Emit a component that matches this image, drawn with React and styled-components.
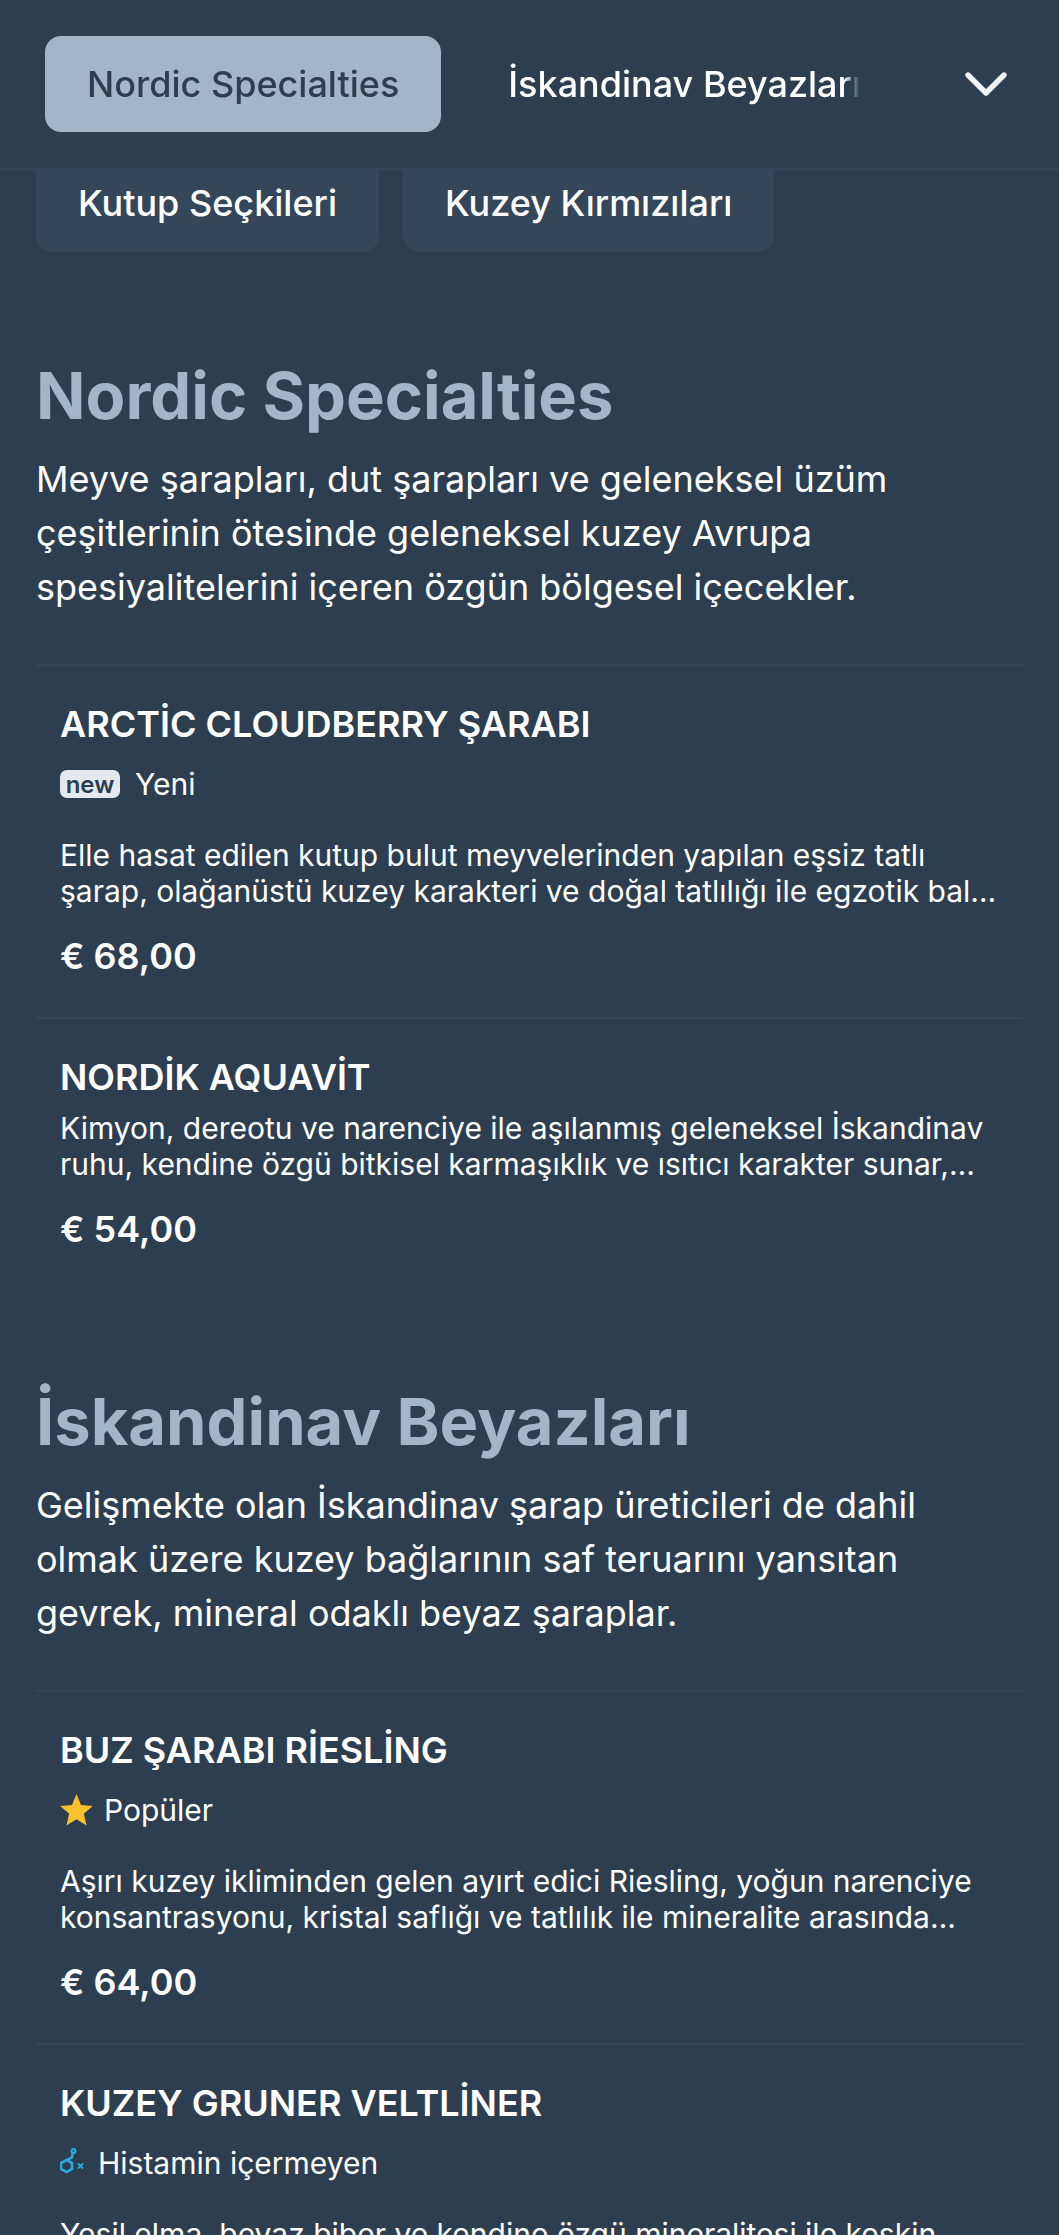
import React from 'react';
import styled, { createGlobalStyle } from 'styled-components';
import { ChevronDown } from 'lucide-react';

const GlobalStyle = createGlobalStyle`
  html, body {
    margin: 0;
    padding: 0;
    background: #2c3e50;
  }
  #root {
    height: 2235px;
    overflow: hidden;
  }
`;

const Page = styled.div`
  font-family: Inter, "Noto Sans", sans-serif;
  color: #fff;
  background: #2c3e50;
`;

const Header = styled.header`
  display: flex;
  align-items: center;
  height: 170px;
  padding: 0 37px 0 45px;
  box-sizing: border-box;
  border-bottom: 2px solid #34465a;
`;

const TabStrip = styled.div`
  display: flex;
  gap: 25px;
  width: 815px;
  overflow: hidden;
  mask-image: linear-gradient(to right, #000 98%, transparent);
`;

const Tab = styled.div`
  flex: none;
  display: flex;
  align-items: center;
  height: 96px;
  padding: 0 42px;
  border-radius: 16px;
  font-size: 36px;
  font-weight: 500;
  white-space: nowrap;
  color: ${(p) => (p.$active ? '#2c3e50' : '#fff')};
  background: ${(p) => (p.$active ? '#a3b5ca' : 'transparent')};
`;

const Toggle = styled.div`
  margin-left: auto;
  display: flex;
  color: #f2f4f6;
`;

const PillRow = styled.div`
  display: flex;
  gap: 24px;
  padding: 0 36px;
`;

const Pill = styled.div`
  display: flex;
  align-items: center;
  height: 82px;
  padding: 0 42px 16px;
  box-sizing: border-box;
  border-radius: 0 0 16px 16px;
  background: #34465a;
  font-size: 36px;
  font-weight: 500;
`;

const Section = styled.section`
  padding: ${(p) => p.$top}px 36px 0;
`;

const SectionTitle = styled.h2`
  margin: 0;
  font-size: 65px;
  line-height: 84px;
  font-weight: 700;
  color: #a3b5ca;
`;

const SectionText = styled.p`
  margin: 14px 0 0;
  font-size: 36px;
  line-height: 54px;
  font-weight: 400;
`;

const ItemList = styled.div`
  margin-top: 50px;
`;

const Item = styled.article`
  padding: 36px 24px 39px;
  border-top: 2px solid #34465a;
`;

const ItemName = styled.h3`
  margin: 0;
  font-size: 36px;
  line-height: 44px;
  font-weight: 600;
`;

const TagRow = styled.div`
  display: flex;
  align-items: center;
  gap: ${(p) => p.$gap}px;
  margin-top: 14px;
  height: 48px;
  font-size: 30px;
`;

const NewBadge = styled.span`
  display: flex;
  align-items: center;
  justify-content: center;
  width: 60px;
  height: 28px;
  border-radius: 7px;
  background: #e5e8ec;
  color: #2c3e50;
  font-size: 24px;
  font-weight: 600;
`;

const ItemText = styled.p`
  margin: ${(p) => (p.$tight ? '11px' : '29px')} 0 0;
  font-size: 30px;
  line-height: 36px;
  display: -webkit-box;
  -webkit-box-orient: vertical;
  -webkit-line-clamp: 2;
  overflow: hidden;
`;

const Price = styled.div`
  margin-top: 25px;
  font-size: 36px;
  line-height: 44px;
  font-weight: 600;
`;

const StarIcon = () => (
  <svg width="33" height="33" viewBox="1 1 22 22">
    <path
      fill="#fbc02d"
      d="M12 1l3 7.3 7.8.7-5.9 5.2 1.8 7.8L12 17.9l-6.7 4.1 1.8-7.8L1.2 9l7.8-.7z"
    />
  </svg>
);

const HistamineIcon = () => (
  <svg width="25" height="30" viewBox="0 0 25 30" fill="none" stroke="#29a9d8" strokeWidth="2.6">
    <circle cx="13.5" cy="3" r="2" strokeWidth="2.2" />
    <path d="M12.8 5L12 9.5 7 12" />
    <path d="M6.5 12l5.5 3v6l-5.5 3L1 21v-6z" />
    <path d="M18 15.5l5 5M23 15.5l-5 5" strokeWidth="2" />
  </svg>
);

const sections = [
  {
    top: 102,
    title: 'Nordic Specialties',
    text: 'Meyve şarapları, dut şarapları ve geleneksel üzüm çeşitlerinin ötesinde geleneksel kuzey Avrupa spesiyalitelerini içeren özgün bölgesel içecekler.',
    items: [
      {
        name: 'ARCTİC CLOUDBERRY ŞARABI',
        tag: 'new',
        text: 'Elle hasat edilen kutup bulut meyvelerinden yapılan eşsiz tatlı şarap, olağanüstü kuzey karakteri ve doğal tatlılığı ile egzotik bal aromaları ve uzun bir bitiş sunar.',
        price: '€ 68,00',
      },
      {
        name: 'NORDİK AQUAVİT',
        text: 'Kimyon, dereotu ve narenciye ile aşılanmış geleneksel İskandinav ruhu, kendine özgü bitkisel karmaşıklık ve ısıtıcı karakter sunar, soğuk servis edilir ve uzun süre kalır.',
        price: '€ 54,00',
      },
    ],
  },
  {
    top: 90,
    title: 'İskandinav Beyazları',
    text: 'Gelişmekte olan İskandinav şarap üreticileri de dahil olmak üzere kuzey bağlarının saf teruarını yansıtan gevrek, mineral odaklı beyaz şaraplar.',
    items: [
      {
        name: 'BUZ ŞARABI RİESLİNG',
        tag: 'popular',
        text: 'Aşırı kuzey ikliminden gelen ayırt edici Riesling, yoğun narenciye konsantrasyonu, kristal saflığı ve tatlılık ile mineralite arasında olağanüstü bir denge sunar.',
        price: '€ 64,00',
      },
      {
        name: 'KUZEY GRUNER VELTLİNER',
        tag: 'histamine',
        text: 'Yeşil elma, beyaz biber ve kendine özgü mineralitesi ile keskin asitliğe sahip ferah ve zarif bir kuzey beyazı.',
        price: '€ 58,00',
      },
    ],
  },
];

const Tag = ({ type }) => {
  if (type === 'new') {
    return (
      <TagRow $gap={15}>
        <NewBadge>new</NewBadge>
        Yeni
      </TagRow>
    );
  }
  if (type === 'popular') {
    return (
      <TagRow $gap={11}>
        <StarIcon />
        Popüler
      </TagRow>
    );
  }
  return (
    <TagRow $gap={13}>
      <HistamineIcon />
      Histamin içermeyen
    </TagRow>
  );
};

export default function App() {
  return (
    <Page>
      <GlobalStyle />
      <Header>
        <TabStrip>
          <Tab $active>Nordic Specialties</Tab>
          <Tab>İskandinav Beyazları</Tab>
        </TabStrip>
        <Toggle>
          <ChevronDown size={72} strokeWidth={1.8} />
        </Toggle>
      </Header>
      <PillRow>
        <Pill>Kutup Seçkileri</Pill>
        <Pill>Kuzey Kırmızıları</Pill>
      </PillRow>
      {sections.map((s) => (
        <Section key={s.title} $top={s.top}>
          <SectionTitle>{s.title}</SectionTitle>
          <SectionText>{s.text}</SectionText>
          <ItemList>
            {s.items.map((item) => (
              <Item key={item.name}>
                <ItemName>{item.name}</ItemName>
                {item.tag && <Tag type={item.tag} />}
                <ItemText $tight={!item.tag}>{item.text}</ItemText>
                <Price>{item.price}</Price>
              </Item>
            ))}
          </ItemList>
        </Section>
      ))}
    </Page>
  );
}
